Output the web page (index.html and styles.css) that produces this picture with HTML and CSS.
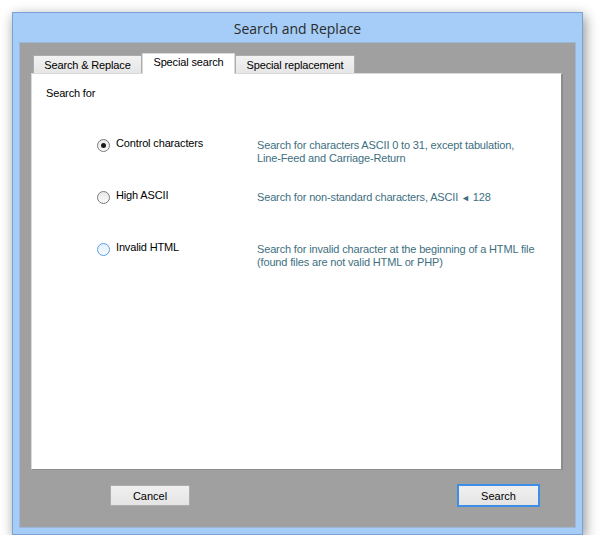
FILE: index.html
```html
<!DOCTYPE html>
<html>
<head>
  <title>Search and Replace</title>
  <link rel="stylesheet" href="styles.css">
</head>
<body>
  <div class="window">
    <div class="titlebar">Search and Replace</div>
    <div class="client">
      <!-- Tabs -->
      <div class="tabs">
        <div class="tab tab-replace">Search &amp; Replace</div>
        <div class="tab active tab-special">Special search</div>
        <div class="tab tab-replacement">Special replacement</div>
      </div>

      <div class="panel">
        <div class="group-title">Search for</div>

        <div class="options">
          <div class="option">
            <label class="choice">
              <span class="radio checked"></span>
              Control characters
            </label>
            <div class="desc">Search for characters ASCII 0 to 31, except tabulation,<br>Line-Feed and Carriage-Return</div>
          </div>
          <div class="option">
            <label class="choice">
              <span class="radio"></span>
              High ASCII
            </label>
            <div class="desc">Search for non-standard characters, ASCII <span class="arrow">◄</span> 128</div>
          </div>
          <div class="option">
            <label class="choice">
              <span class="radio hover"></span>
              Invalid HTML
            </label>
            <div class="desc">Search for invalid character at the beginning of a HTML file<br>(found files are not valid HTML or PHP)</div>
          </div>
        </div>
      </div>

      <div class="footer">
        <button class="btn">Cancel</button>
        <button class="btn btn-default">Search</button>
      </div>
    </div>
  </div>
</body>
</html>
```

FILE: styles.css
```css
* {
  box-sizing: border-box;
  margin: 0;
  padding: 0;
}

body {
  background: #fff;
  font-family: 'Liberation Sans', Arial, sans-serif;
  font-size: 11px;
  letter-spacing: -0.15px;
  color: #000;
  padding: 12px 0 0 12px;
}

.window {
  width: 571px;
  height: 523px;
  background: #a5cdf7;
  border: 1px solid #79a3d6;
  box-shadow: 2px 4px 12px rgba(0, 0, 0, 0.45);
  display: flex;
  flex-direction: column;
}

.titlebar {
  height: 29px;
  display: flex;
  align-items: center;
  justify-content: center;
  font-family: 'Open Sans', 'Liberation Sans', sans-serif;
  font-size: 14px;
  letter-spacing: 0;
  color: #2b2b2b;
  padding-top: 1px;
}

.client {
  margin: 0 6px 6px 6px;
  flex: 1;
  background: #a0a0a0;
  border: 1px solid #9bb8d8;
  padding: 10px 12px 0 11px;
  display: flex;
  flex-direction: column;
}

.tabs {
  display: flex;
  align-items: flex-end;
  height: 20px;
  padding-left: 2px;
  position: relative;
  z-index: 1;
}

.tab {
  height: 18px;
  display: flex;
  align-items: center;
  justify-content: center;
  background: linear-gradient(to bottom, #f2f2f2, #e6e6e6);
  border: 1px solid #acacac;
  border-bottom: none;
  color: #000;
}

.tab-replace {
  width: 109px;
}

.tab-special {
  width: 93px;
}

.tab-replacement {
  width: 120px;
}

.tab.active {
  height: 21px;
  background: #fff;
  border-color: #d9d9d9;
  align-items: flex-start;
  padding-top: 2px;
  margin-bottom: -1px;
}

.panel {
  height: 397px;
  background: #fff;
  border: 1px solid #d9d9d9;
  border-right: 2px solid #8c8c8c;
  border-bottom: 1px solid #8c8c8c;
  padding: 13px 0 0 14px;
}

.group-title {
  line-height: 13px;
}

.options {
  margin-top: 37px;
  padding-left: 51px;
}

.option {
  display: flex;
  align-items: flex-start;
  height: 52px;
}

.choice {
  display: flex;
  align-items: flex-start;
  gap: 6px;
  width: 160px;
  line-height: 13px;
}

.radio {
  width: 13px;
  height: 13px;
  margin-top: 2px;
  border-radius: 50%;
  border: 1px solid #7a7a7a;
  background: linear-gradient(to bottom, #e8e8e8, #fafafa);
  position: relative;
  flex-shrink: 0;
}

.radio.checked::after {
  content: '';
  position: absolute;
  top: 3px;
  left: 3px;
  width: 5px;
  height: 5px;
  border-radius: 50%;
  background: #1a1a1a;
}

.radio.hover {
  border-color: #5aa0e8;
  background: linear-gradient(to bottom, #e4f0fc, #f6fafe);
}

.desc {
  margin-top: 2px;
  line-height: 13px;
  color: #3d6f7f;
}

.arrow {
  font-size: 9px;
}

.footer {
  display: flex;
  justify-content: space-between;
  align-items: flex-start;
  padding: 14px 23px 0 79px;
}

.btn {
  font-family: 'Liberation Sans', Arial, sans-serif;
  font-size: 11px;
  color: #000;
  width: 80px;
  height: 21px;
  margin-top: 1px;
  background: linear-gradient(to bottom, #f0f0f0, #e4e4e4);
  border: 1px solid #acacac;
}

.btn-default {
  width: 83px;
  height: 23px;
  margin-top: 0;
  border: 2px solid #3d8ee6;
}
```
